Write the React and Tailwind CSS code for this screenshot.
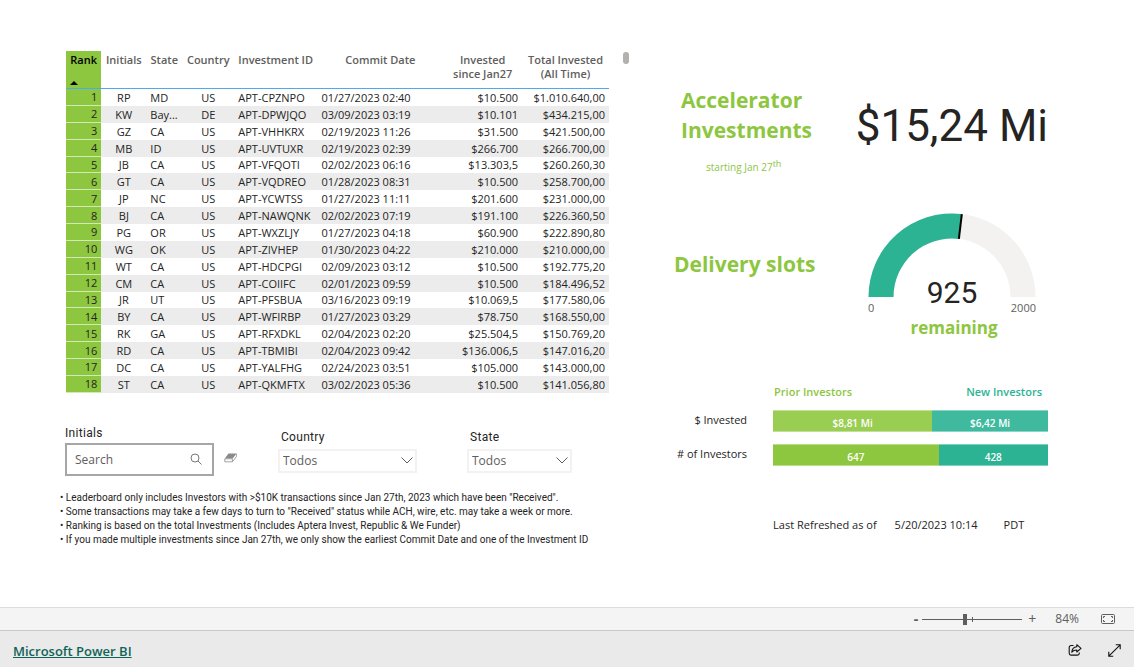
import { useState } from 'react'

const investors = [
  ['RP', 'MD', 'US', 'APT-CPZNPO', '01/27/2023 02:40', '$10.500', '$1.010.640,00'],
  ['KW', 'Bay...', 'DE', 'APT-DPWJQO', '03/09/2023 03:19', '$10.101', '$434.215,00'],
  ['GZ', 'CA', 'US', 'APT-VHHKRX', '02/19/2023 11:26', '$31.500', '$421.500,00'],
  ['MB', 'ID', 'US', 'APT-UVTUXR', '02/19/2023 02:39', '$266.700', '$266.700,00'],
  ['JB', 'CA', 'US', 'APT-VFQOTI', '02/02/2023 06:16', '$13.303,5', '$260.260,30'],
  ['GT', 'CA', 'US', 'APT-VQDREO', '01/28/2023 08:31', '$10.500', '$258.700,00'],
  ['JP', 'NC', 'US', 'APT-YCWTSS', '01/27/2023 11:11', '$201.600', '$231.000,00'],
  ['BJ', 'CA', 'US', 'APT-NAWQNK', '02/02/2023 07:19', '$191.100', '$226.360,50'],
  ['PG', 'OR', 'US', 'APT-WXZLJY', '01/27/2023 04:18', '$60.900', '$222.890,80'],
  ['WG', 'OK', 'US', 'APT-ZIVHEP', '01/30/2023 04:22', '$210.000', '$210.000,00'],
  ['WT', 'CA', 'US', 'APT-HDCPGI', '02/09/2023 03:12', '$10.500', '$192.775,20'],
  ['CM', 'CA', 'US', 'APT-COIIFC', '02/01/2023 09:59', '$10.500', '$184.496,52'],
  ['JR', 'UT', 'US', 'APT-PFSBUA', '03/16/2023 09:19', '$10.069,5', '$177.580,06'],
  ['BY', 'CA', 'US', 'APT-WFIRBP', '01/27/2023 03:29', '$78.750', '$168.550,00'],
  ['RK', 'GA', 'US', 'APT-RFXDKL', '02/04/2023 02:20', '$25.504,5', '$150.769,20'],
  ['RD', 'CA', 'US', 'APT-TBMIBI', '02/04/2023 09:42', '$136.006,5', '$147.016,20'],
  ['DC', 'CA', 'US', 'APT-YALFHG', '02/24/2023 03:51', '$105.000', '$143.000,00'],
  ['ST', 'CA', 'US', 'APT-QKMFTX', '03/02/2023 05:36', '$10.500', '$141.056,80']
]

const notes = [
  'Leaderboard only includes Investors with >$10K transactions since Jan 27th, 2023 which have been "Received".',
  'Some transactions may take a few days to turn to "Received" status while ACH, wire, etc. may take a week or more.',
  'Ranking is based on the total Investments (Includes Aptera Invest, Republic & We Funder)',
  'If you made multiple investments since Jan 27th, we only show the earliest Commit Date and one of the Investment ID'
]

const splits = [
  {
    label: '$ Invested',
    prior: 8.81,
    fresh: 6.42,
    priorText: '$8,81 Mi',
    freshText: '$6,42 Mi',
    priorColor: 'bg-[#99ce52]',
    freshColor: 'bg-[#3fba9f]'
  },
  {
    label: '# of Investors',
    prior: 647,
    fresh: 428,
    priorText: '647',
    freshText: '428',
    priorColor: 'bg-[#8dc63f]',
    freshColor: 'bg-[#2bb394]'
  }
]

const Leaderboard = () => (
  <div className="flex items-start gap-3.5">
    <table className="h-[342px] flex-1 table-fixed border-separate border-spacing-0 text-[11px] leading-[15px] text-[#252423]">
      <colgroup>
        <col className="w-[6.5%]" />
        <col className="w-[8.3%]" />
        <col className="w-[6.6%]" />
        <col className="w-[9.6%]" />
        <col className="w-[15.3%]" />
        <col className="w-[23.2%]" />
        <col className="w-[14.5%]" />
        <col className="w-[16%]" />
      </colgroup>
      <thead>
        <tr className="h-[38px] align-top leading-[14px] text-[#605e5c] [&>th]:border-b [&>th]:border-[#4fa9f0] [&>th]:pt-0.5 [&>th]:font-semibold [&>th]:whitespace-nowrap">
          <th aria-sort="ascending" className="bg-[#8dc63f] text-black">
            Rank
            <svg viewBox="0 0 8 4" className="mt-3.5 ml-1 h-1 w-2">
              <path d="M0 4 4 0 8 4z" fill="#000" />
            </svg>
          </th>
          <th>Initials</th>
          <th>State</th>
          <th>Country</th>
          <th className="pl-1 text-left">Investment ID</th>
          <th>Commit Date</th>
          <th>Invested<br />since Jan27</th>
          <th>Total Invested<br />(All Time)</th>
        </tr>
      </thead>
      <tbody>
        {investors.map(([initials, state, country, id, date, invested, total], index) => (
          <tr key={id} className="whitespace-nowrap even:bg-[#ececec]">
            <td className="border-b border-[#d3e8b5] bg-[#8dc63f] pr-1 text-right">{index + 1}</td>
            <td className="text-center">{initials}</td>
            <td className="pl-1">{state}</td>
            <td className="text-center">{country}</td>
            <td className="pl-1">{id}</td>
            <td className="pl-1">{date}</td>
            <td className="pr-1 text-right">{invested}</td>
            <td className="pr-1 text-right">{total}</td>
          </tr>
        ))}
      </tbody>
    </table>
    <div className="mt-px h-3 w-1.5 rounded-full bg-[#b3b0ad]" />
  </div>
)

const Dropdown = ({ id, label, className }) => (
  <div className={className}>
    <label htmlFor={id} className="block font-[Roboto] text-xs leading-4 tracking-wide text-[#252423]">
      <span className="pl-[3px]">{label}</span>
    </label>
    <div className="relative mt-1">
      <select
        id={id}
        className="block h-6 w-full appearance-none border-2 border-[#f3f2f1] bg-white px-[3px] text-[12px] leading-4 text-[#605e5c]"
      >
        <option>Todos</option>
      </select>
      <svg viewBox="0 0 12 7" className="pointer-events-none absolute top-2 right-1 h-[7px] w-3" fill="none" stroke="#605e5c">
        <path d="M.5.5 6 6 11.5.5" />
      </svg>
    </div>
  </div>
)

const Filters = () => (
  <div className="mt-8 flex items-start">
    <div className="-ml-px w-[149px]">
      <label htmlFor="initials" className="block font-[Roboto] text-xs leading-4 tracking-wide text-[#252423]">
        Initials
      </label>
      <div className="relative mt-0.5">
        <input
          id="initials"
          type="text"
          placeholder="Search"
          className="block h-[33px] w-full border-2 border-[#a6a6a6] bg-white pr-7 pl-2 text-[12px] text-[#605e5c] placeholder:text-[#605e5c]"
        />
        <svg viewBox="0 0 12 12" className="absolute top-2.5 right-3 size-3" fill="none" stroke="#777">
          <circle cx="5" cy="5" r="4" />
          <path d="m8 8 3.5 3.5" />
        </svg>
      </div>
    </div>
    <button type="button" aria-label="Clear selections" className="mt-7 ml-2.5">
      <svg viewBox="0 0 13 10" className="h-2.5 w-[13px]">
        <path d="M4.5.5h8L8.7 5.6H.8z" fill="#8a8a8a" />
        <path d="M.8 5.8h7.6v3H.8zM8.5 8.6l3.9-4.9V.7" fill="#fff" stroke="#8a8a8a" strokeWidth=".8" />
      </svg>
    </button>
    <Dropdown id="country" label="Country" className="mt-1 ml-[41px] w-[139px]" />
    <Dropdown id="state" label="State" className="mt-1 ml-[50px] w-[105px]" />
  </div>
)

const Gauge = () => {
  const value = 1075
  const angle = (value / 2000) * Math.PI
  const point = (r) => `${84 - r * Math.cos(angle)} ${84 - r * Math.sin(angle)}`

  return (
    <div className="w-[168px]">
      <div className="relative">
        <svg viewBox="0 0 168 84" className="block h-[84px] w-[168px]">
          <path d="M.5 84a83.5 83.5 0 0 1 167 0h-25a58.5 58.5 0 0 0-117 0z" fill="#f3f2f1" />
          <path d={`M.5 84A83.5 83.5 0 0 1 ${point(83.5)}L${point(58.5)}A58.5 58.5 0 0 0 25.5 84z`} fill="#2bb394" />
          <path d={`M${point(83.5)}L${point(58.5)}`} stroke="#000" strokeWidth="2" />
        </svg>
        <p className="absolute inset-x-0 -bottom-3 text-center font-[Roboto] text-[30px] leading-8 text-[#252423]">925</p>
      </div>
      <div className="mt-[3px] flex justify-between text-[11px] leading-4 text-[#605e5c]">
        <span>0</span>
        <span>2000</span>
      </div>
      <p className="pl-1 text-center text-[17px] leading-6 font-bold text-[#8dc63f]">remaining</p>
    </div>
  )
}

const InvestorSplit = () => (
  <div className="mt-11 text-[11px] leading-4">
    <div className="ml-[26.5%] flex justify-between pr-1.5 pl-px font-semibold">
      <span className="text-[#8dc63f]">Prior Investors</span>
      <span className="text-[#2bb394]">New Investors</span>
    </div>
    {splits.map((split, index) => (
      <div key={split.label} className={index === 0 ? 'mt-2.5 flex' : 'mt-3 flex'}>
        <p className="w-[26.5%] pt-0.5 pr-[26px] text-right whitespace-nowrap text-[#252423]">{split.label}</p>
        <div className="flex h-[22px] flex-1 text-center text-[10px] leading-6 font-semibold text-white">
          <div
            className={`border-y border-white/40 ${split.priorColor}`}
            style={{ width: `${(split.prior / (split.prior + split.fresh)) * 100}%` }}
          >
            {split.priorText}
          </div>
          <div className={`flex-1 border-y border-white/40 ${split.freshColor}`}>{split.freshText}</div>
        </div>
      </div>
    ))}
  </div>
)

const Summary = () => (
  <section className="min-w-0 flex-[374]">
    <div className="flex items-start justify-between pt-[34px] pl-[7px]">
      <div>
        <h1 className="text-[21px] leading-[30px] font-bold text-[#8dc63f]">
          Accelerator<br />Investments
        </h1>
        <p className="mt-3.5 pl-[25px] text-[10px] leading-4 text-[#8dc63f]">
          starting Jan 27<sup className="text-[9px]">th</sup>
        </p>
      </div>
      <p className="mt-3 font-[Roboto] text-[44px] leading-[58px] whitespace-nowrap text-[#252423]">$15,24 Mi</p>
    </div>
    <div className="mt-[38px] flex items-start justify-between pr-3">
      <h2 className="mt-9 text-[21px] leading-[30px] font-bold text-[#8dc63f]">Delivery slots</h2>
      <Gauge />
    </div>
    <InvestorSplit />
    <div className="mt-[51px] ml-[26.5%] flex text-[11px] leading-4 whitespace-nowrap text-[#252423]">
      <span>Last Refreshed as of</span>
      <span className="ml-[18px]">5/20/2023 10:14</span>
      <span className="ml-[26px]">PDT</span>
    </div>
  </section>
)

const ZoomBar = () => {
  const [zoom, setZoom] = useState(42)

  return (
    <div className="flex h-[23px] items-center justify-end border-t border-[#dcdcdc] bg-[#f4f4f4] pr-[19px] text-[12px] text-[#605e5c]">
      <button type="button" aria-label="Zoom out" className="mr-1 text-sm font-bold">-</button>
      <div className="relative flex h-4 w-[100px] items-center">
        <input
          type="range"
          aria-label="Zoom"
          value={zoom}
          onChange={(e) => setZoom(Number(e.target.value))}
          className="h-px w-full appearance-none bg-[#605e5c] [&::-webkit-slider-thumb]:h-[11px] [&::-webkit-slider-thumb]:w-1 [&::-webkit-slider-thumb]:appearance-none [&::-webkit-slider-thumb]:bg-[#605e5c]"
        />
        <span className="absolute left-1/2 h-[5px] w-px bg-[#605e5c]" />
      </div>
      <button type="button" aria-label="Zoom in" className="ml-1.5 text-sm">+</button>
      <span className="ml-[19px]">84%</span>
      <button type="button" aria-label="Fit to page" className="ml-[22px]">
        <svg viewBox="0 0 14 10" className="h-2.5 w-3.5" fill="none" stroke="#605e5c">
          <rect x=".5" y=".5" width="13" height="9" rx="1" />
          <path d="M2.5 4V2.5H4M10 2.5h1.5V4M11.5 6v1.5H10M4 7.5H2.5V6" />
        </svg>
      </button>
    </div>
  )
}

const Footer = () => (
  <footer className="flex h-[37px] items-center border-t border-[#c8c8c8] bg-[#eaeaea] px-[13px]">
    <a href="https://powerbi.microsoft.com" className="flex-1 pt-1 text-[13px] leading-5 font-semibold text-[#0f6458] underline">
      Microsoft Power BI
    </a>
    <button type="button" aria-label="Share" className="pt-0.5">
      <svg viewBox="0 0 14 12" className="h-3 w-3.5" fill="none" stroke="#111" strokeWidth="1.1" strokeLinejoin="round">
        <path d="M5.5 1.5H3A1.8 1.8 0 0 0 1.2 3.3v6A1.8 1.8 0 0 0 3 11.100h6.500a1.800 1.800 0 0 0 1.800-1.800V8.500" />
        <path d="M8.8.7 13 4.4 8.8 8V6C6.500 6 5 6.600 3.800 8.200 4 5 5.800 2.900 8.800 2.700z" />
      </svg>
    </button>
    <button type="button" aria-label="Full screen" className="ml-[26px] pt-0.5">
      <svg viewBox="0 0 13 13" className="size-[13px]" fill="none" stroke="#111" strokeWidth="1.1">
        <path d="M.8 12.200 12.200.8M7.800.8h4.400v4.400M.8 7.800v4.400h4.400" />
      </svg>
    </button>
  </footer>
)

export default function App() {
  return (
    <div className="flex min-h-screen flex-col bg-white font-['Open_Sans','Noto_Sans',sans-serif]">
      <main className="flex flex-1 gap-[45px] pt-[51px] pr-[86px] pb-8 pl-[66px]">
        <section className="min-w-0 flex-[563]">
          <Leaderboard />
          <Filters />
          <ul className="mt-[15px] -ml-1.5 font-[Roboto] text-[10px] leading-[14px] whitespace-nowrap text-[#252423]">
            {notes.map((note) => (
              <li key={note}>• {note}</li>
            ))}
          </ul>
        </section>
        <Summary />
      </main>
      <ZoomBar />
      <Footer />
    </div>
  )
}
